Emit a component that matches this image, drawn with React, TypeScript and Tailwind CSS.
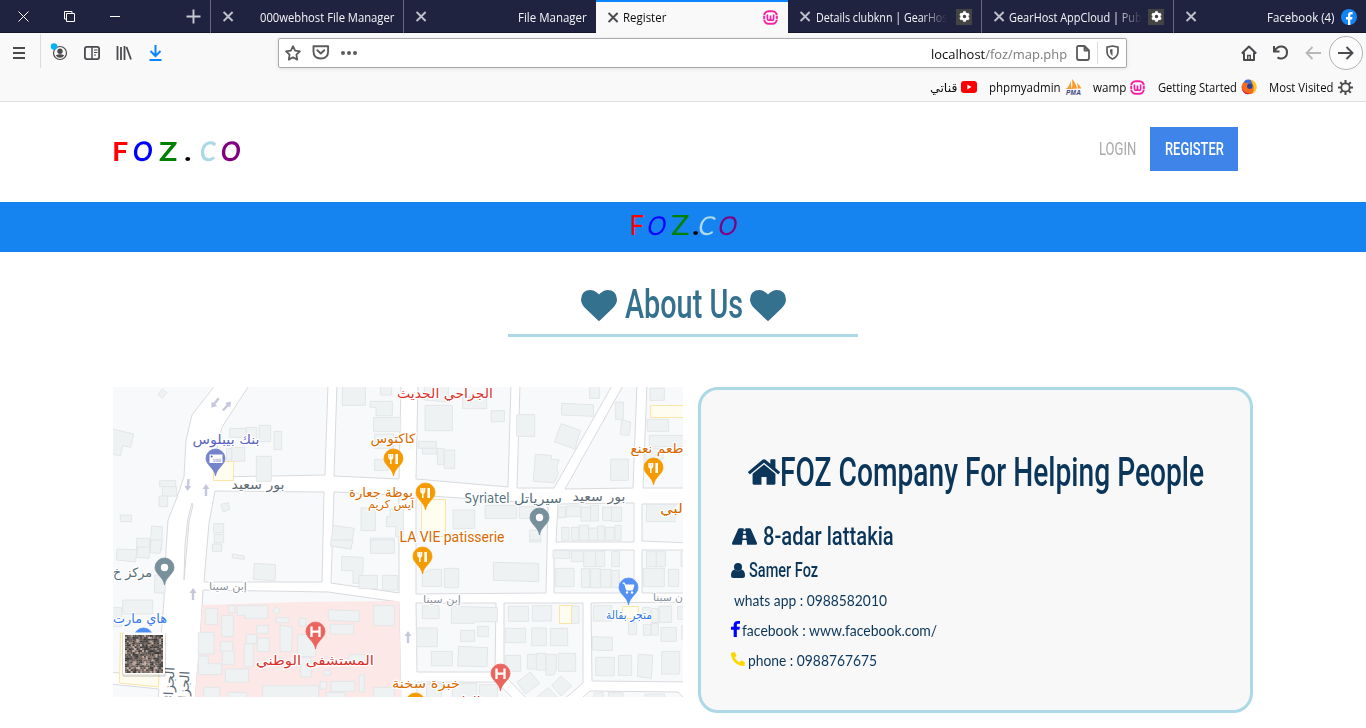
import React, { useLayoutEffect, useRef } from "react";
import { FaCog, FaPhoneAlt, FaRoad } from "react-icons/fa";

/* Condenses a line of text so that it fills the width of its box. */
function Fit({ className, children }: { className: string; children: React.ReactNode }) {
  const outer = useRef<HTMLSpanElement>(null);
  const inner = useRef<HTMLSpanElement>(null);
  useLayoutEffect(() => {
    const fit = () => {
      const o = outer.current;
      const i = inner.current;
      if (o && i && i.offsetWidth) i.style.transform = `scaleX(${o.clientWidth / i.offsetWidth})`;
    };
    fit();
    document.fonts?.ready.then(fit);
  }, []);
  return (
    <span ref={outer} className={`block shrink-0 whitespace-nowrap ${className}`}>
      <span ref={inner} className="inline-block origin-left">
        {children}
      </span>
    </span>
  );
}

const X = ({ className = "" }: { className?: string }) => (
  <svg className={`size-[11px] shrink-0 ${className}`} viewBox="0 0 11 11" fill="none" stroke="currentColor" strokeWidth="1.9">
    <path d="M.6 1l9 9M9.600 1l-9 9" />
  </svg>
);

const Wamp = ({ className = "" }: { className?: string }) => (
  <svg className={`size-[15px] shrink-0 ${className}`} viewBox="0 0 15 15">
    <rect x="1.2" y="1.2" width="12.6" height="12.6" rx="4.5" fill="#fff" stroke="#f222a0" strokeWidth="2" />
    <path d="M4.4 4.5v4.3q0 1.5 1.5 1.5t1.6-1.5V5.5v3.3q0 1.5 1.6 1.5t1.5-1.5V4.5" fill="none" stroke="#f222a0" strokeWidth="1.7" />
    <path d="M0 5.6h2.6M0 9.4h2.6M12.4 5.6H15M12.4 9.4H15" stroke="#fff" strokeWidth=".7" />
  </svg>
);

const Heart = ({ className = "" }: { className?: string }) => (
  <svg className={`h-[31px] w-[36px] shrink-0 ${className}`} viewBox="0 128 1792 1536" fill="currentColor">
    <path d="M896 1664q-26 0-44-18l-624-602q-10-8-27.500-26T145 952.500 77 855 23.500 734 0 596q0-220 127-344t351-124q62 0 126.500 21.500t120 58T820 276t76 68q36-36 76-68t95.500-68.500 120-58T1314 128q224 0 351 124t127 344q0 221-229 450l-623 600q-18 18-44 18z" />
  </svg>
);

const Home = () => (
  <svg className="h-[26px] w-[32px] shrink-0" viewBox="89 253 1614 1283" fill="currentColor">
    <path d="M1472 992v480q0 26-19 45t-45 19h-384v-384H768v384H384q-26 0-45-19t-19-45V992q0-1 .5-3t.5-3l575-474 575 474q1 2 1 6zm223-69l-62 74q-8 9-21 11h-3q-13 0-21-7L896 424l-692 577q-12 8-24 7-13-2-21-11l-62-74q-8-10-7-23.500T101 878l719-599q32-26 76-26t76 26l244 204V288q0-14 9-23t23-9h192q14 0 23 9t9 23v408l219 182q10 8 11 21.500t-7 23.500z" />
  </svg>
);

const GearBox = () => (
  <span className="flex size-4 shrink-0 items-center justify-center bg-[#444]">
    <FaCog className="size-[11px] text-white" />
  </span>
);

function TabBar() {
  return (
    <div className="flex h-[33px] bg-[#20233f] text-[12px] text-[#f5f5fa] shadow-[inset_0_-1px_0_#14162c]">
      <div className="flex w-[211px] items-center border-r border-[#67687e] pl-[18px]">
        <svg className="h-[11px] w-[11px]" viewBox="0 0 11 11" fill="none" stroke="#fff"><path d="M.5.5l10 10M10.5.5l-10 10" /></svg>
        <svg className="ml-[35px] h-[11px] w-[11px]" viewBox="0 0 11 11" fill="none" stroke="#fff"><path d="M.5.5h7.5v7.5H.5z" /><path d="M2.5 2.5h8v8h-8z" fill="#20233f" /></svg>
        <svg className="ml-[35px] h-[11px] w-[11px]" viewBox="0 0 11 11" stroke="#fff"><path d="M0 5.5h10" /></svg>
        <svg className="ml-[65px] h-[15px] w-[15px]" viewBox="0 0 15 15" stroke="#c8c8d4" strokeWidth="1.9"><path d="M7.5 .5v14M.5 7.500h14" /></svg>
      </div>
      <div className="flex w-[193px] items-center justify-between border-r border-[#67687e] pl-3 pr-[9px]">
        <X className="text-[#bfc0cb]" />
        <Fit className="w-[134px] pt-[2px]">000webhost File Manager</Fit>
      </div>
      <div className="flex w-[192px] items-center justify-between pl-3 pr-[9px]">
        <X className="text-[#bfc0cb]" />
        <Fit className="w-[69px] pt-[2px]">File Manager</Fit>
      </div>
      <div className="flex w-[192px] items-center border-t-2 border-[#0a84ff] bg-[#f9f9fa] pb-[1px] pl-3 text-[#0c0c0d]">
        <X className="text-[#4a4a4f]" />
        <Fit className="ml-[4px] w-[43px] pt-[2px]">Register</Fit>
        <Wamp className="ml-auto mr-[10px]" />
      </div>
      <div className="flex w-[194px] items-center border-r border-[#67687e] pl-3">
        <X className="text-[#bfc0cb]" />
        <div className="ml-[5px] w-[131px] overflow-hidden pt-[2px] [mask-image:linear-gradient(to_right,#000_80%,transparent)]">
          <Fit className="w-[131px]">Details clubknn | GearHos</Fit>
        </div>
        <span className="ml-[9px]"><GearBox /></span>
      </div>
      <div className="flex w-[192px] items-center border-r border-[#67687e] pl-3">
        <X className="text-[#bfc0cb]" />
        <div className="ml-[4px] w-[133px] overflow-hidden pt-[2px] [mask-image:linear-gradient(to_right,#000_80%,transparent)]">
          <Fit className="w-[133px]">GearHost AppCloud | Pub</Fit>
        </div>
        <span className="ml-[6px]"><GearBox /></span>
      </div>
      <div className="flex flex-1 items-center pl-3 pr-[9px]">
        <X className="text-[#bfc0cb]" />
        <Fit className="ml-auto mr-[6px] w-[68px] pt-[2px]">Facebook (4)</Fit>
        <svg className="size-4" viewBox="0 0 16 16"><circle cx="8" cy="8" r="8" fill="#1484f5" /><path d="M7 16v-5.6H5V8.1h2V6.3C7 4.2 8.200 3.100 10 3.100c.9 0 1.600.1 1.600.1v2h-1c-1 0-1.300.6-1.300 1.300v1.600h2.200l-.4 2.300H9.300V16z" fill="#fff" /></svg>
      </div>
    </div>
  );
}

function Toolbar() {
  return (
    <div className="flex h-[35px] items-center text-[#4a4a4f]">
      <div className="flex h-[34px] w-[41px] items-center border-r border-[#dcdcde] pl-[13px] pt-1">
        <svg className="h-[12px] w-[12px]" viewBox="0 0 12 12" stroke="currentColor" strokeWidth="1.8"><path d="M0 1h12M0 6h12M0 11h12" /></svg>
      </div>
      <svg className="ml-[9px] mt-1 h-[20px] w-[18px]" viewBox="0 0 18 20" fill="none" stroke="currentColor">
        <circle cx="10" cy="10" r="6.500" strokeWidth="1.200" />
        <circle cx="10" cy="8.200" r="2.700" fill="currentColor" stroke="none" />
        <path d="M5.800 12.300q4.200-2 8.400 0q-1.400 2.500-4.200 2.500t-4.200-2.500z" fill="currentColor" stroke="none" />
        <circle cx="4" cy="3.500" r="3.200" fill="#00b3f4" stroke="none" />
      </svg>
      <svg className="ml-[16px] mt-1 h-[14px] w-[16px]" viewBox="0 0 16 14" fill="none" stroke="currentColor" strokeWidth="1.800">
        <rect x=".9" y=".9" width="14.200" height="12.200" rx="2" /><path d="M8 1v12" strokeWidth="1.500" /><path d="M10 4h3.500M10 6.500h3.500M10 9h2" strokeWidth="1" />
      </svg>
      <svg className="ml-[16px] mt-1 h-[14px] w-[16px]" viewBox="0 0 16 14" fill="none" stroke="currentColor" strokeWidth="1.800"><path d="M1.500 0v14M5 1v13M8.500 0v14M10.500 1l4.500 12.500" /></svg>
      <svg className="ml-[17px] mt-1 h-[16px] w-[13px]" viewBox="0 0 13 16" fill="none" stroke="#0a84ff" strokeWidth="2"><path d="M6.500 0v11M1.500 6l5 5 5-5M.5 15h12" /></svg>
      <div className="ml-[116px] mt-[4px] flex h-[30px] w-[849px] items-center rounded-[2px] border border-[#a9a9ac] bg-white pl-[6px] shadow-[0_1px_4px_rgba(0,0,0,0.1)]">
        <svg className="size-4" viewBox="0 0 16 16" fill="none" stroke="#5b5b5e" strokeWidth="1.800" strokeLinejoin="round"><path d="M8 1.200l2.100 4.400 4.800.7-3.500 3.400.8 4.900L8 12.300l-4.200 2.300.8-4.900L1.100 6.300l4.800-.7z" /></svg>
        <svg className="ml-[11px] h-[15px] w-[18px]" viewBox="0 0 18 15" fill="none" stroke="#5b5b5e" strokeWidth="1.900"><path d="M1.500 1.200h14.600v5.300q0 7-7.300 7t-7.300-7z" strokeLinejoin="round" /><path d="M5.300 5.200l3.500 3.300 3.500-3.300" strokeLinecap="round" /></svg>
        <svg className="ml-[11px] h-[4px] w-[17px]" viewBox="0 0 17 4" fill="#5b5b5e"><circle cx="2" cy="2" r="2" /><circle cx="8" cy="2" r="2" /><circle cx="14" cy="2" r="2" /></svg>
        <Fit className="ml-auto w-[136px] pt-[4px] text-[13.500px] text-[#7b7b7e]"><span className="text-[#0c0c0d]">localhost</span>/foz/map.php</Fit>
        <svg className="ml-[9px] h-[16px] w-[14px]" viewBox="0 0 14 16" fill="none" stroke="#5b5b5e" strokeWidth="1.800"><path d="M2.500 1h6l4.500 4.500V13q0 2-2 2H3q-2 0-2-2V2.500Q1 1 2.500 1zM8.500 1v4.500H13" strokeLinejoin="round" /></svg>
        <div className="ml-[7px] h-[22px] w-px bg-[#dcdcde]" />
        <svg className="ml-[8px] mr-[7px] h-[15px] w-[13px]" viewBox="0 0 13 15" fill="none" stroke="#5b5b5e" strokeWidth="1.700"><path d="M6.500 1L12 2.200v4.300q0 5-5.500 7.500Q1 11.500 1 6.500V2.200z" strokeLinejoin="round" /><path d="M6.500 4v7q-2.500-2-2.500-4.500V4.500z" fill="#5b5b5e" stroke="none" /></svg>
      </div>
      <svg className="ml-[114px] mt-1 h-[16px] w-[16px]" viewBox="0 0 16 16" fill="none" stroke="currentColor" strokeWidth="2"><path d="M.8 8.500L8 1.500l7.200 7M3 7.500V15h10V7.500" strokeLinejoin="round" /><path d="M6.700 15v-4.500h2.600V15" strokeWidth="1.400" /></svg>
      <svg className="ml-[16px] mt-1 h-[15px] w-[16px]" viewBox="0 0 16 15" fill="none" stroke="currentColor" strokeWidth="2"><path d="M1 1v5.500h5.500M1.500 6Q4.500 1 9 1.600q5 .8 5 5.800t-5 6q-2.600.4-4.500-1" /></svg>
      <svg className="ml-[16px] mt-1 h-[14px] w-[16px]" viewBox="0 0 16 14" fill="none" stroke="#b8b8bb" strokeWidth="1.800"><path d="M16 7H1.500M7.500 1l-6 6 6 6" /></svg>
      <div className="ml-[8px] mt-1 flex size-[34px] shrink-0 items-center justify-center rounded-full border border-[#b1b1b3] bg-[#fcfcfd]">
        <svg className="h-[14px] w-[16px]" viewBox="0 0 16 14" fill="none" stroke="currentColor" strokeWidth="1.900"><path d="M0 7h14.500M8.500 1l6 6-6 6" /></svg>
      </div>
    </div>
  );
}

function Bookmarks() {
  return (
    <div className="flex h-[33px] items-center justify-end pr-[13px] pt-[5px] text-[12px] text-[#0c0c0d]">
      <Fit className="w-[27px] pt-[2px] font-['DejaVu_Sans',sans-serif]">قناتي</Fit>
      <svg className="ml-[4px] h-[12px] w-[16px]" viewBox="0 0 16 12"><rect width="16" height="12" rx="3" fill="#f00" /><path d="M6.300 3.500v5L10.500 6z" fill="#fff" /></svg>
      <Fit className="ml-[12px] w-[72px] pt-[2px]">phpmyadmin</Fit>
      <svg className="ml-[4px] h-[16px] w-[17px]" viewBox="0 0 17 16">
        <path d="M0 10Q4 9 5.500 2l1 8zM6.500 10Q8 6 7 0q4 4 5 9.500zM12.500 9.500Q13 7 12 4q3 2 4.500 5.500z" fill="#f89c2f" />
        <text x="1" y="15.500" fontSize="6.500" fontWeight="bold" fontStyle="italic" fontFamily="Liberation Sans, sans-serif" fill="#3d4477" textLength="15">PMA</text>
      </svg>
      <Fit className="ml-[11px] w-[33px] pt-[2px]">wamp</Fit>
      <Wamp className="ml-[4px]" />
      <Fit className="ml-[13px] w-[79px] pt-[2px]">Getting Started</Fit>
      <svg className="ml-[4px] size-4" viewBox="0 0 16 16">
        <circle cx="8" cy="8" r="7.300" fill="#f66a1c" />
        <path d="M8.500 .3q7 1.700 7.200 7.400-.2 5-4.500 7.300 2.300-4 1.300-8-.8-3.500-4-6.700z" fill="#ffc52a" />
        <path d="M3.500 2Q6-.3 9.500 1l2 3.200-3 .8q-1.500-1.500-3-.8L3.500 3.800z" fill="#3a6fd8" />
        <circle cx="8.800" cy="7.300" r="2.700" fill="#24449b" />
        <path d="M.7 6.500q0 7 8.300 8Q5 16.500 2.300 13 .3 10.500.7 6.500z" fill="#e0223c" />
      </svg>
      <Fit className="ml-[12px] w-[64px] pt-[2px]">Most Visited</Fit>
      <svg className="ml-[5px] size-[15px]" viewBox="0 0 15 15" fill="none" stroke="#4a4a4f"><circle cx="7.500" cy="7.500" r="4.200" strokeWidth="1.800" /><path d="M7.500 0v3M7.500 12v3M0 7.500h3M12 7.500h3M2.200 2.200l2.200 2.200M10.600 10.600l2.200 2.200M12.800 2.200l-2.200 2.200M4.400 10.600l-2.200 2.200" strokeWidth="2" /></svg>
    </div>
  );
}

/* City blocks, in the map's own coordinates */
const blocks = [
  "110,384 216,384 192,415 186,440 184,477 176,500 168,520 166,550 164,600 160,650 158,677 110,672",
  "110,684 159,689 158,700 110,700",
  "192,503 188,518 185,545 184,580 187,545 189,522 193,505",
  "250,384 328,384 325,475 215,477 217,447 222,427",
  "337,384 401,384 399,479 334,476",
  "418,384 511,384 508,487 416,479",
  "520,384 613,384 554,488 517,488",
  "624,384 637,384 633,488 565,489",
  "647,384 690,384 690,488 643,488",
  "215,491 324,492 322,582 204,582 207,546 209,523",
  "334,492 399,495 399,593 331,583",
  "416,495 548,504 546,593 416,594",
  "558,504 634,503 634,542 556,542",
  "554,550 634,550 634,593 554,593",
  "642,504 690,504 690,543 642,541",
  "642,550 690,550 690,593 642,593",
  "203,590 328,592 399,602 401,700 195,700 200,640",
  "416,603 496,603 495,672 417,672",
  "504,603 583,603 583,683 563,700 528,700 504,675",
  "591,603 690,602 690,682 592,681",
  "417,682 496,682 515,700 417,705",
  "590,691 678,692 690,704 575,704",
];

/* Building footprints, one list per map sheet; a sheet is drawn at three times the map's scale */
const sheets: { at: string; shapes: string[] }[] = [
  {
    at: "translate(105 380) scale(.33333)",
    shapes: [
      "172,27 186,38 172,55 159,44", "20,146 86,162 77,202 53,197 46,228 20,221",
      "374,145 424,145 424,172 374,172", "424,142 455,142 455,180 424,180", "462,136 497,136 497,185 462,185", "507,154 530,154 530,209 507,209",
      "380,202 419,202 419,244 380,244", "365,205 380,205 380,240 365,240", "454,229 499,229 499,304 454,304",
      "164,302 212,302 212,320 164,320", "172,320 215,320 215,348 172,348", "162,348 188,348 188,380 162,380",
      "348,373 370,368 374,388 354,396", "46,405 80,405 80,425 46,425", "326,431 356,431 356,458 326,458", "328,463 356,463 356,488 328,488", "322,493 350,493 350,511 322,511",
      "140,438 172,440 170,511 134,511", "95,475 134,475 134,511 95,511",
      "712,15 781,15 781,76 712,76", "826,15 860,15 860,45 826,45", "795,64 862,64 862,107 813,107 813,82 795,82", "806,112 887,112 887,155 806,155", "809,162 866,162 866,205 809,205", "809,238 850,238 850,271 809,271",
      "768,384 811,384 811,452 768,452", "684,436 748,445 738,507 677,498", "796,474 868,474 868,511 796,511", "855,387 896,387 896,470 872,470 872,440 844,440 844,410 855,410",
    ],
  },
  {
    at: "translate(395 380) scale(.33333)",
    shapes: [
      "90,76 172,76 172,152 90,152", "88,15 160,15 160,66 88,60", "203,50 275,50 275,86 203,86", "288,92 328,92 328,125 288,125", "365,104 419,104 419,169 365,169",
      "70,184 124,184 124,205 70,205", "82,205 126,205 126,222 82,222", "127,205 147,205 147,254 127,254", "148,210 179,210 179,265 148,265",
      "584,15 613,15 613,55 584,55", "500,70 595,74 595,109 500,105", "499,131 556,151 540,207 478,185", "421,223 469,226 469,238 493,240 485,260 490,280 478,308 415,304",
      "662,66 685,66 685,118 662,118", "680,120 707,126 703,166 676,164", "647,237 700,237 700,301 647,301", "765,25 808,25 808,61 765,61", "757,118 821,118 821,154 757,154", "763,166 870,166 870,200 763,200", "750,205 804,205 804,238 750,238",
      "174,390 239,390 239,445 174,445", "270,376 365,376 365,415 270,415", "373,380 425,380 425,415 373,415", "404,450 437,450 437,484 404,484",
      "489,381 512,381 512,413 489,413", "514,378 558,378 558,410 514,410", "558,381 587,381 587,423 558,423", "587,376 610,376 610,423 587,423", "623,381 650,381 650,422 623,422", "650,381 680,381 680,424 650,424",
      "500,442 522,442 522,481 500,481", "529,442 552,442 552,481 529,481", "553,436 581,436 581,481 553,481", "581,444 608,444 608,481 581,481", "608,438 628,438 628,481 608,481", "632,442 657,442 657,481 632,481", "660,436 678,436 678,481 660,481",
      "754,373 840,373 840,425 754,425",
    ],
  },
  {
    at: "translate(105 540) scale(.33333)",
    shapes: [
      "36,27 95,30 92,66 34,60", "98,20 134,22 132,55 95,52", "138,0 172,0 165,40 136,38", "150,105 182,105 180,160 148,158", "53,180 143,180 143,222 53,222", "20,203 50,203 50,260 20,260",
      "323,12 350,12 350,34 323,34", "382,42 418,48 418,58 382,54", "448,70 512,74 510,122 445,118",
      "678,0 744,0 737,27 678,18", "797,0 868,0 868,40 797,40", "710,49 774,52 774,92 762,130 744,130 744,92 710,92", "762,106 817,106 817,146 762,146", "832,106 878,106 878,150 832,150",
      "302,205 338,205 338,254 302,254", "371,196 389,196 389,218 371,218", "396,197 488,197 488,235 420,235 420,226 396,226", "350,226 385,226 385,290 350,290", "514,200 527,212 514,224 503,212", "512,233 552,233 552,248 512,248",
      "583,235 602,235 602,259 583,259", "670,209 763,213 763,245 670,241", "676,253 746,253 746,282 676,282", "806,197 868,197 868,257 806,257",
      "455,256 490,256 490,280 455,280", "424,283 455,283 455,311 424,311", "457,294 493,294 493,335 457,335", "525,256 562,262 560,335 525,335", "280,277 327,277 327,342 280,342", "347,305 383,305 383,335 347,335", "418,311 445,311 445,380 418,380",
      "352,333 388,333 388,373 352,373", "280,348 310,348 310,371 350,371 350,404 280,404", "361,387 431,387 431,426 361,426", "578,284 632,284 632,350 578,350", "587,352 618,352 618,411 587,411", "656,391 677,391 677,405 656,405", "732,344 806,344 806,374 732,374",
      "645,425 665,425 665,447 645,447", "678,424 749,424 749,454 678,454", "762,405 778,405 778,456 762,456", "473,437 641,437 641,480 473,480", "296,442 344,442 344,480 296,480", "368,457 426,457 426,480 368,480", "663,457 720,457 720,480 663,480", "806,442 868,442 868,480 806,480",
    ],
  },
  {
    at: "translate(395 540) scale(.33333)",
    shapes: [
      "82,100 110,88 140,88 140,139 82,139", "148,85 191,85 191,143 148,143", "295,67 431,70 431,125 295,121", "404,0 438,0 438,6 404,6",
      "474,31 524,31 524,55 474,55", "529,33 565,33 565,65 529,65", "566,33 602,33 602,80 566,80", "602,33 629,33 629,80 602,80", "650,35 673,35 673,80 650,80", "482,85 537,85 537,140 482,140", "559,86 584,86 584,142 559,142", "587,86 616,86 616,143 587,143", "617,88 648,88 648,143 617,143", "650,91 673,91 673,143 650,143",
      "754,35 784,35 784,80 754,80", "784,35 811,35 811,80 784,80", "745,85 808,85 808,140 745,140", "820,88 851,88 851,139 820,139", "858,35 870,35 870,80 858,80",
      "82,197 132,197 132,236 82,236", "169,199 307,203 307,245 238,245 238,250 169,250", "65,264 127,264 127,320 65,320", "197,271 239,271 239,305 197,305", "248,259 280,259 280,290 248,290", "109,334 172,334 172,377 109,377", "191,319 278,323 276,380 188,378",
      "340,199 401,199 401,244 340,244", "412,197 470,197 470,243 412,243", "529,198 552,198 552,250 529,250", "330,265 392,265 392,308 330,308", "410,264 454,264 454,317 410,317", "466,265 518,265 518,317 466,317", "332,346 377,346 377,394 332,394", "397,343 426,343 426,387 397,387", "424,340 453,340 453,390 424,390", "453,343 484,343 484,390 476,405 453,405", "490,340 542,340 542,394 490,394", "406,396 434,430 392,462 366,427", "498,408 530,438 498,468 470,436", "420,475 460,443 490,475",
      "595,197 650,197 650,243 595,243", "743,202 765,202 765,223 743,223", "770,205 790,205 790,247 770,247", "792,198 830,198 830,247 792,247", "848,199 870,199 870,238 848,238", "700,248 725,248 725,284 700,284", "745,253 768,253 768,286 745,286", "769,250 790,250 790,285 769,285", "798,262 844,262 844,304 798,304", "860,256 870,256 870,298 860,298",
      "592,290 652,292 652,332 592,330", "602,352 658,352 658,407 602,407", "670,346 710,346 710,406 670,406", "730,343 773,346 769,415 727,410", "800,334 854,334 854,402 800,402", "95,432 140,430 140,475 95,475", "172,430 245,430 245,475 172,475", "253,434 307,434 307,475 253,475", "597,460 625,458 625,475 597,475", "640,458 684,458 684,475 640,475", "750,462 808,462 808,475 750,475",
    ],
  },
];

function Pin({ x, y, color, children }: { x: number; y: number; color: string; children?: React.ReactNode }) {
  return (
    <g transform={`translate(${x} ${y})`}>
      <path d="M0 0C-1-8-9.500-11-9.500-17.500a9.500 9.500 0 0 1 19 0C9.500-11 1-8 0 0z" fill={color} stroke={color} strokeWidth=".8" />
      {children}
    </g>
  );
}

const Fork = () => (
  <g fill="none" stroke="#fff">
    <path d="M-4.500-22v3q0 1.800 1.800 1.800T-.9-19v-3M-2.700-22v10" strokeWidth="1.500" />
    <path d="M3.200-22v10" strokeWidth="2.600" />
  </g>
);

function Label({ x, y, w, size, color, children, latin }: { x: number; y: number; w: number; size: number; color: string; children: string; latin?: boolean }) {
  return (
    <text
      x={x}
      y={y}
      textAnchor="middle"
      textLength={w}
      lengthAdjust="spacingAndGlyphs"
      fontSize={size}
      fill={color}
      stroke="#fff"
      strokeWidth="2.500"
      strokeLinejoin="round"
      paintOrder="stroke"
      fontFamily={latin ? "Roboto, sans-serif" : "DejaVu Sans, sans-serif"}
    >
      {children}
    </text>
  );
}

function Arrow({ x, y, r = 0 }: { x: number; y: number; r?: number }) {
  return <path transform={`translate(${x} ${y}) rotate(${r})`} d="M0-6l3.500 5H1.200v7h-2.400v-7h-2.300z" fill="#c5c7dd" />;
}

function CityMap() {
  const photo = [];
  for (let i = 0; i < 400; i++) {
    const n = (i * 7919 + ((i * i) % 97) * 31) % 101;
    const tone = ["#5d5450", "#8c7b72", "#3c3838", "#c4ac9e", "#756762", "#4b4949"][n % 6];
    photo.push(<rect key={i} x={125 + (i % 20) * 1.9} y={635 + Math.floor(i / 20) * 1.9} width={1.9 + (n % 3)} height="1.900" fill={tone} />);
  }
  return (
    <svg className="block h-[310px] w-[570px] shrink-0" viewBox="113 387 570 310">
      <rect x="113" y="387" width="570" height="310" fill="#fff" />
      <g fill="#f8f9fb" stroke="#d8dade">
        {blocks.map((p, i) => <polygon key={i} points={p} />)}
      </g>
      <polygon points="202,605 300,602 399,601 401,697 195,697 200,640" fill="#fce8e7" />
      {sheets.map((s, k) => (
        <g key={k} transform={s.at} fill="#eef2f3" stroke="#e2e6e8" strokeWidth="3">
          {s.shapes.map((p, i) => <polygon key={i} points={p} />)}
        </g>
      ))}
      <g fill="#fffcf0" stroke="#fbe5a6">
        <path d="M213.500 461.500h20v19h-20zM421.500 499.500h24v37h-24zM650.500 405.500h40v12h-40zM559.500 605.500h12v18h-12zM622.500 606.500h16v12h-16zM120.500 633l40 5-2 49-39-4z" />
      </g>
      <Arrow x={215} y={403} r={218} /><Arrow x={227} y={406} r={42} /><Arrow x={188} y={485} r={185} /><Arrow x={206} y={490} /><Arrow x={193} y={594} /><Arrow x={408} y={637} />

      <Label x={445} y={398} w={96} size={13} color="#d9302c">الجراحي الحديث</Label>
      <Label x={226} y={444} w={67} size={13} color="#5a63c0">بنك بيبلوس</Label>
      <Label x={258} y={489} w={53} size={13} color="#5c6b75">بور سعيد</Label>
      <Label x={393} y={443} w={45} size={13} color="#d86a00">كاكتوس</Label>
      <Label x={381} y={497} w={64} size={13} color="#d86a00">بوظة جعارة</Label>
      <Label x={391} y={508} w={46} size={11} color="#d86a00">آيس كريم</Label>
      <Label x={487} y={503} w={45} size={14} color="#546e7a">Syriatel</Label>
      <Label x={538} y={503} w={48} size={13} color="#546e7a">سيرياتل</Label>
      <Label x={599} y={501} w={53} size={13} color="#5c6b75">بور سعيد</Label>
      <Label x={657} y={453} w={53} size={13} color="#d86a00">طعم نعنع</Label>
      <Label x={671.500} y={513} w={23} size={13} color="#d86a00">لبي</Label>
      <Label x={452} y={542} w={105} size={14} color="#d86a00" latin>LA VIE patisserie</Label>
      <Label x={132.500} y={577} w={39} size={13} color="#546e7a">مركز خ</Label>
      <Label x={228} y={590} w={38} size={10.500} color="#8a929c">إبن سينا</Label>
      <Label x={442} y={603} w={38} size={10.500} color="#8a929c">إبن سينا</Label>
      <Label x={668} y={601} w={30} size={10.500} color="#8a929c">ن سينا</Label>
      <Label x={629} y={619} w={46} size={11.500} color="#3278e6">متجر بقالة</Label>
      <Label x={140} y={623} w={54} size={13} color="#3278e6">هاي مارت</Label>
      <Label x={315} y={665} w={118} size={13} color="#d9302c">المستشفى الوطني</Label>
      <Label x={426} y={688} w={68} size={13} color="#d86a00">خبزة سخنة</Label>
      <Label x={463} y={706} w={35} size={13} color="#d9302c">الطبية</Label>
      <g transform="translate(173.500 687) rotate(-87)"><Label x={0} y={0} w={40} size={13} color="#5c6b75">الجزائر</Label></g>
      <g transform="translate(188.500 691) rotate(-87)"><Label x={0} y={0} w={40} size={13} color="#5c6b75">الجزائر</Label></g>

      <Pin x={215.500} y={476} color="#7583ca"><rect x="-6" y="-21.500" width="13" height="8.500" fill="#fff" /><circle cx="-3.800" cy="-19.500" r="1" fill="#5965b5" /><text x="-3" y="-14.500" fontSize="4.500" fontFamily="DejaVu Sans, sans-serif" fill="#5965b5">100</text></Pin>
      <Pin x={393.500} y={476} color="#f59a00"><Fork /></Pin>
      <Pin x={425.500} y={510} color="#f59a00"><Fork /></Pin>
      <Pin x={653.500} y={485} color="#f59a00"><Fork /></Pin>
      <Pin x={422.500} y={574} color="#f59a00"><Fork /></Pin>
      <Pin x={415.500} y={720} color="#f59a00"><Fork /></Pin>
      <Pin x={539.500} y={535} color="#78909c"><circle cy="-17.500" r="3.700" fill="#fff" /></Pin>
      <Pin x={164.500} y={585} color="#78909c"><circle cy="-17.500" r="3.700" fill="#fff" /></Pin>
      <Pin x={143.500} y={655} color="#4f8df5" />
      <Pin x={628.500} y={605} color="#5491f5"><path d="M-6-22h2l2 7h6l1.500-5h-9" fill="#fff" stroke="#fff" strokeWidth="1" /><circle cx="-1.500" cy="-12.500" r="1.200" fill="#fff" /><circle cx="3.500" cy="-12.500" r="1.200" fill="#fff" /></Pin>
      <Pin x={315.500} y={649} color="#eb655f"><path d="M-4-22.500v10.500M4-22.500v10.500M-4-17.300h8" stroke="#fff" strokeWidth="2.300" /></Pin>
      <Pin x={500.500} y={691} color="#eb655f"><path d="M-4-22.500v10.500M4-22.500v10.500M-4-17.300h8" stroke="#fff" strokeWidth="2.300" /></Pin>

      <rect x="122" y="633" width="44" height="44" rx="2" fill="#000" opacity=".13" />
      <rect x="123" y="632.500" width="42" height="42" rx="2" fill="#fff" />
      <svg x="125" y="635" width="38" height="38" viewBox="125 635 38 38">{photo}</svg>
    </svg>
  );
}

const hand = "font-['Lato',sans-serif] leading-none";
const narrow = "font-['Roboto',sans-serif]";

export default function App() {
  return (
    <div className="h-[728px] w-[1366px] overflow-hidden bg-white font-['Open_Sans',sans-serif]">
      <TabBar />
      <div className="h-[69px] border-b border-[#dfdfe0] bg-[#f9f9fa]">
        <Toolbar />
        <Bookmarks />
      </div>

      <header className="flex h-[100px] items-center justify-between pl-[112px] pr-[128px]">
        <div className={`flex items-center pb-[4px] text-[27px] font-bold ${hand}`}>
          <Fit className="w-[16px] text-[#f00]">F</Fit>
          <Fit className="ml-[5px] w-[20px] -skew-x-6 text-[#00f]">O</Fit>
          <Fit className="ml-[6px] w-[18px] text-[#008000]">Z</Fit>
          <Fit className="ml-[7px] w-[7px] text-black">.</Fit>
          <Fit className="ml-[9px] w-[16px] -skew-x-6 text-[#add8e6]">C</Fit>
          <Fit className="ml-[5px] w-[20px] -skew-x-6 text-[#800080]">O</Fit>
        </div>
        <nav className={`flex items-center pb-[6px] text-[19px] ${narrow}`}>
          <Fit className="w-[37px] text-[#a8a8a8]">LOGIN</Fit>
          <div className="ml-[14px] flex h-[44px] w-[88px] items-center justify-center bg-[#3f84e8] text-white">
            <Fit className="w-[59px] font-medium">REGISTER</Fit>
          </div>
        </nav>
      </header>

      <div className={`flex h-[50px] items-center justify-center bg-[#1684f0] pb-[4px] pl-px text-[26px] ${hand}`}>
        <Fit className="w-[15px] text-[#f00]">F</Fit>
        <Fit className="ml-[3px] w-[19px] -skew-x-12 text-[#00f]">O</Fit>
        <Fit className="ml-[4px] w-[19px] text-[#008000]">Z</Fit>
        <Fit className="ml-[2px] w-[7px] font-bold text-black">.</Fit>
        <Fit className="w-[16px] -skew-x-12 text-[#add8e6]">C</Fit>
        <Fit className="ml-[4px] w-[19px] -skew-x-12 text-[#800080]">O</Fit>
      </div>

      <section className="flex flex-col items-center">
        <h1 className={`mt-[22px] flex h-[60px] w-[350px] items-center justify-center text-[41px] leading-none text-[#33718f] ${narrow}`}>
          <Heart className="mt-[3px]" />
          <Fit className="ml-[8px] w-[118px] font-medium">About Us</Fit>
          <Heart className="ml-[7px] mt-[3px]" />
        </h1>
        <div className="h-[3px] w-[350px] bg-[#add8e6]" />
      </section>

      <main className="mt-[50px] flex pl-[113px]">
        <CityMap />
        <article className="ml-[15px] h-[326px] w-[555px] rounded-[20px] border-[3px] border-[#add8e6] bg-[#f8f8f8] pl-[30px] text-[#0b365a]">
          <h2 className={`mt-[54px] flex h-[56px] items-center pl-[17px] text-[41px] leading-none ${narrow}`}>
            <Home />
            <Fit className="w-[424px] font-medium">FOZ Company For Helping People</Fit>
          </h2>
          <h3 className={`mt-[19px] flex h-[34px] items-center text-[25px] leading-none ${narrow}`}>
            <FaRoad className="ml-[1px] size-[25px]" />
            <Fit className="ml-[6px] w-[131px] font-medium">8-adar lattakia</Fit>
          </h3>
          <h4 className={`mt-[2px] flex h-[30px] items-center text-[20px] leading-none ${narrow}`}>
            <svg className="mt-px h-[15px] w-[14px]" viewBox="0 0 14 15" fill="currentColor"><circle cx="7" cy="4" r="4" /><path d="M3.500 6.500Q7 10 10.500 6.500 14 7.500 14 12.500 14 15 11.500 15h-9Q0 15 0 12.500 0 7.500 3.500 6.500z" /></svg>
            <Fit className="ml-[4px] w-[69px] font-medium">Samer Foz</Fit>
          </h4>
          <div className="font-['Lato',sans-serif] text-[15px] leading-[30px]">
            <p className="flex h-[30px] items-center pl-[3px]"><Fit className="w-[153px]">whats app : 0988582010</Fit></p>
            <p className="flex h-[30px] items-center">
              <svg className="mb-[2px] h-[16px] w-[9px]" viewBox="479 0 864 1664" fill="#00f" preserveAspectRatio="none">
                <path d="M1343 12v264h-157q-86 0-116 36t-30 108v189h293l-39 296h-254v759H734V905H479V609h255V391q0-186 104-288.500T1115 0q147 0 228 12z" />
              </svg>
              <Fit className="ml-[2px] w-[195px]">facebook : www.facebook.com/</Fit>
            </p>
            <p className="flex h-[30px] items-center">
              <FaPhoneAlt className="mb-[2px] size-[14px] text-[#ffd700]" />
              <Fit className="ml-[3px] w-[129px]">phone : 0988767675</Fit>
            </p>
          </div>
        </article>
      </main>
    </div>
  );
}
